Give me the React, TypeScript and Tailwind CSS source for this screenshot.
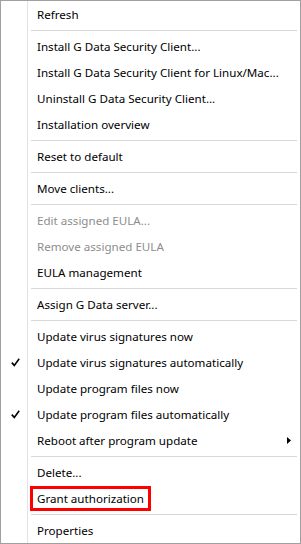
import React from "react";

type Entry =
  | { sep: true }
  | {
      sep?: false;
      label: string;
      disabled?: boolean;
      checked?: boolean;
      submenu?: boolean;
      highlight?: boolean;
    };

const entries: Entry[] = [
  { label: "Refresh" },
  { sep: true },
  { label: "Install G Data Security Client..." },
  { label: "Install G Data Security Client for Linux/Mac..." },
  { label: "Uninstall G Data Security Client..." },
  { label: "Installation overview" },
  { sep: true },
  { label: "Reset to default" },
  { sep: true },
  { label: "Move clients..." },
  { sep: true },
  { label: "Edit assigned EULA...", disabled: true },
  { label: "Remove assigned EULA", disabled: true },
  { label: "EULA management" },
  { sep: true },
  { label: "Assign G Data server..." },
  { sep: true },
  { label: "Update virus signatures now" },
  { label: "Update virus signatures automatically", checked: true },
  { label: "Update program files now" },
  { label: "Update program files automatically", checked: true },
  { label: "Reboot after program update", submenu: true },
  { sep: true },
  { label: "Delete..." },
  { label: "Grant authorization", highlight: true },
  { sep: true },
  { label: "Properties" },
];

const Check = () => (
  <svg width="9" height="9" viewBox="0 0 9 9">
    <path d="M0.8 4.6 L3.3 7.4 L8.2 0.8" fill="none" stroke="#000" strokeWidth="1.6" />
  </svg>
);

export default function App() {
  return (
    <div
      className="w-[301px] h-[544px] bg-white border border-[#a0a0a0] flex flex-col text-[11.6px] text-black"
      style={{ fontFamily: '"Noto Sans", "Open Sans", sans-serif' }}
    >
      {entries.map((e, i) =>
        e.sep ? (
          <div key={i} className="flex h-[6px] shrink-0">
            <div className="w-[27px] border-r border-[#e3e3e3] shrink-0" />
            <div className="flex-1 flex items-center pl-[3px] pr-[3px]">
              <div className="h-px w-full bg-[#d7d7d7]" />
            </div>
          </div>
        ) : (
          <div key={i} className="flex h-[26px] shrink-0">
            <div className="w-[27px] border-r border-[#e3e3e3] shrink-0 flex items-center justify-center pl-[2px] pt-[1px]">
              {e.checked && <Check />}
            </div>
            <div className="flex-1 flex items-center pl-[2px] pr-[9px] pt-[1px]">
              <span
                className={
                  e.highlight
                    ? "border-[3px] border-[#ff0000] px-[4px] leading-[19px] whitespace-nowrap"
                    : "px-[7px] whitespace-nowrap " + (e.disabled ? "text-[#8d8d8d]" : "")
                }
              >
                {e.label}
              </span>
              {e.submenu && (
                <svg className="ml-auto" width="4" height="7" viewBox="0 0 4 7">
                  <path d="M0 0 L4 3.5 L0 7 Z" fill="#000" />
                </svg>
              )}
            </div>
          </div>
        )
      )}
    </div>
  );
}
